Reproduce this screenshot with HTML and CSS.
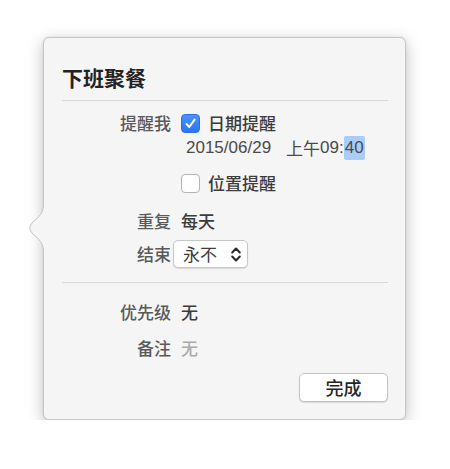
FILE: index.html
```html
<!DOCTYPE html>
<html lang="zh-CN">
<head>
<meta charset="utf-8">
<title>下班聚餐</title>
<link rel="stylesheet" href="styles.css">
</head>
<body>
<div class="panel">
  <svg class="arrow" width="22" height="50" viewBox="0 0 22 50" aria-hidden="true">
    <path class="arrow-fill" d="M18.5,0.5 C18.5,9 14,13 8,18 Q1.5,24 8,30 C14,35 18.5,39 18.5,48 L21,48 L21,0.5 Z"/>
    <path class="arrow-line" d="M18.5,0.5 C18.5,9 14,13 8,18 Q1.5,24 8,30 C14,35 18.5,39 18.5,48"/>
  </svg>
  <h1 class="title">下班聚餐</h1>
  <div class="sep"></div>

  <div class="row r-remind">
    <div class="lbl">提醒我</div>
    <div class="val">
      <span class="cb cb-on">
        <svg width="13" height="13" viewBox="0 0 13 13"><path d="M2.5,7 L5.3,10 L10.6,2.6" fill="none" stroke="#fff" stroke-width="2" stroke-linecap="round" stroke-linejoin="round"/></svg>
      </span>
      <span class="txt">日期提醒</span>
    </div>
  </div>
  <div class="row r-date">
    <div class="lbl"></div>
    <div class="val date"><span class="num">2015/06/29</span><span class="ampm">上午</span><span class="num">09:</span><span class="num hl">40</span></div>
  </div>
  <div class="row r-loc">
    <div class="lbl"></div>
    <div class="val">
      <span class="cb cb-off"></span>
      <span class="txt">位置提醒</span>
    </div>
  </div>
  <div class="row r-repeat">
    <div class="lbl">重复</div>
    <div class="val">每天</div>
  </div>
  <div class="row r-end">
    <div class="lbl">结束</div>
    <div class="val">
      <div class="popup">
        <span>永不</span>
        <svg class="chev" width="12" height="17" viewBox="0 0 12 17"><path d="M2.2,6.5 L6,2.5 L9.8,6.5 M2.2,10.5 L6,14.5 L9.8,10.5" fill="none" stroke="#2a2a2a" stroke-width="2" stroke-linecap="round" stroke-linejoin="round"/></svg>
      </div>
    </div>
  </div>
  <div class="sep sep2"></div>
  <div class="row r-prio">
    <div class="lbl">优先级</div>
    <div class="val">无</div>
  </div>
  <div class="row r-note">
    <div class="lbl">备注</div>
    <div class="val muted">无</div>
  </div>
  <div class="actions">
    <button class="btn" type="button">完成</button>
  </div>
</div>
</body>
</html>
```
FILE: styles.css
```css
html, body {
  margin: 0;
  padding: 0;
  background: #ffffff;
}
body {
  font-family: "Noto Sans CJK SC", "Noto Sans", sans-serif;
  padding: 37px 0 0 43px;
}
.panel {
  position: relative;
  box-sizing: border-box;
  width: 363px;
  height: 383px;
  background: #f5f5f5;
  border: 1px solid #c6c6c6;
  border-radius: 6px;
  box-shadow: 0 4px 16px rgba(0,0,0,0.25), 0 0 2px rgba(0,0,0,0.1);
  padding: 25px 17px 0 18px;
}
.arrow {
  position: absolute;
  left: -19px;
  top: 166px;
  overflow: visible;
}
.arrow-fill {
  fill: #f5f5f5;
}
.arrow-line {
  fill: none;
  stroke: #c4c4c4;
  stroke-width: 1;
}
.title {
  margin: 0;
  font-size: 21px;
  line-height: 28px;
  font-weight: 700;
  color: #232323;
}
.sep {
  height: 1px;
  background: #d9d9d9;
  margin-top: 9px;
}
.row {
  display: flex;
  align-items: center;
  height: 24px;
  font-size: 17px;
  line-height: 24px;
  font-weight: 500;
}
.lbl {
  width: 109px;
  flex: none;
  text-align: right;
  color: #5a5a5a;
}
.val {
  margin-left: 10px;
  display: flex;
  align-items: center;
  color: #3c3c3c;
}
.muted {
  color: #aaaaaa;
}
.txt {
  margin-left: 8px;
}
.cb {
  box-sizing: border-box;
  width: 19px;
  height: 19px;
  border-radius: 4px;
  display: inline-flex;
  align-items: center;
  justify-content: center;
}
.cb-on {
  background: linear-gradient(#4b92fa, #2a76f2);
  border: 1px solid #2a6ee0;
}
.cb-off {
  background: #ffffff;
  border: 1px solid #b4b4b4;
}
.r-remind { margin-top: 10px; }
.r-date { margin-top: 1px; }
.date {
  margin-left: 15px;
  color: #4a4a4a;
}
.num {
  font-family: "Liberation Sans", "Noto Sans CJK SC", sans-serif;
  font-size: 17px;
  font-weight: 400;
}
.ampm {
  margin-left: 15px;
  font-weight: 400;
}
.hl {
  background: #a9cdf9;
  border-radius: 2px;
  padding: 0 1px;
}
.r-loc { margin-top: 11px; }
.r-repeat { margin-top: 14px; }
.r-end {
  margin-top: 7px;
  height: 28px;
}
.popup {
  box-sizing: border-box;
  margin-left: -8px;
  width: 75px;
  height: 28px;
  background: #ffffff;
  border: 1px solid #c6c6c6;
  border-radius: 5px;
  box-shadow: 0 1px 1px rgba(0,0,0,0.12);
  display: flex;
  align-items: center;
  justify-content: space-between;
  padding: 0 5px 0 9px;
  color: #3c3c3c;
  font-weight: 400;
}
.chev { display: block; }
.sep2 { margin-top: 14px; }
.r-prio { margin-top: 17px; }
.r-note { margin-top: 12px; }
.actions {
  display: flex;
  justify-content: flex-end;
  margin-top: 13px;
}
.btn {
  box-sizing: border-box;
  width: 89px;
  height: 29px;
  background: #ffffff;
  border: 1px solid #c4c4c4;
  border-radius: 5px;
  box-shadow: 0 1px 1px rgba(0,0,0,0.12);
  font-family: "Noto Sans CJK SC", "Noto Sans", sans-serif;
  font-size: 18px;
  font-weight: 500;
  line-height: 27px;
  color: #262626;
  padding: 0;
}
```
